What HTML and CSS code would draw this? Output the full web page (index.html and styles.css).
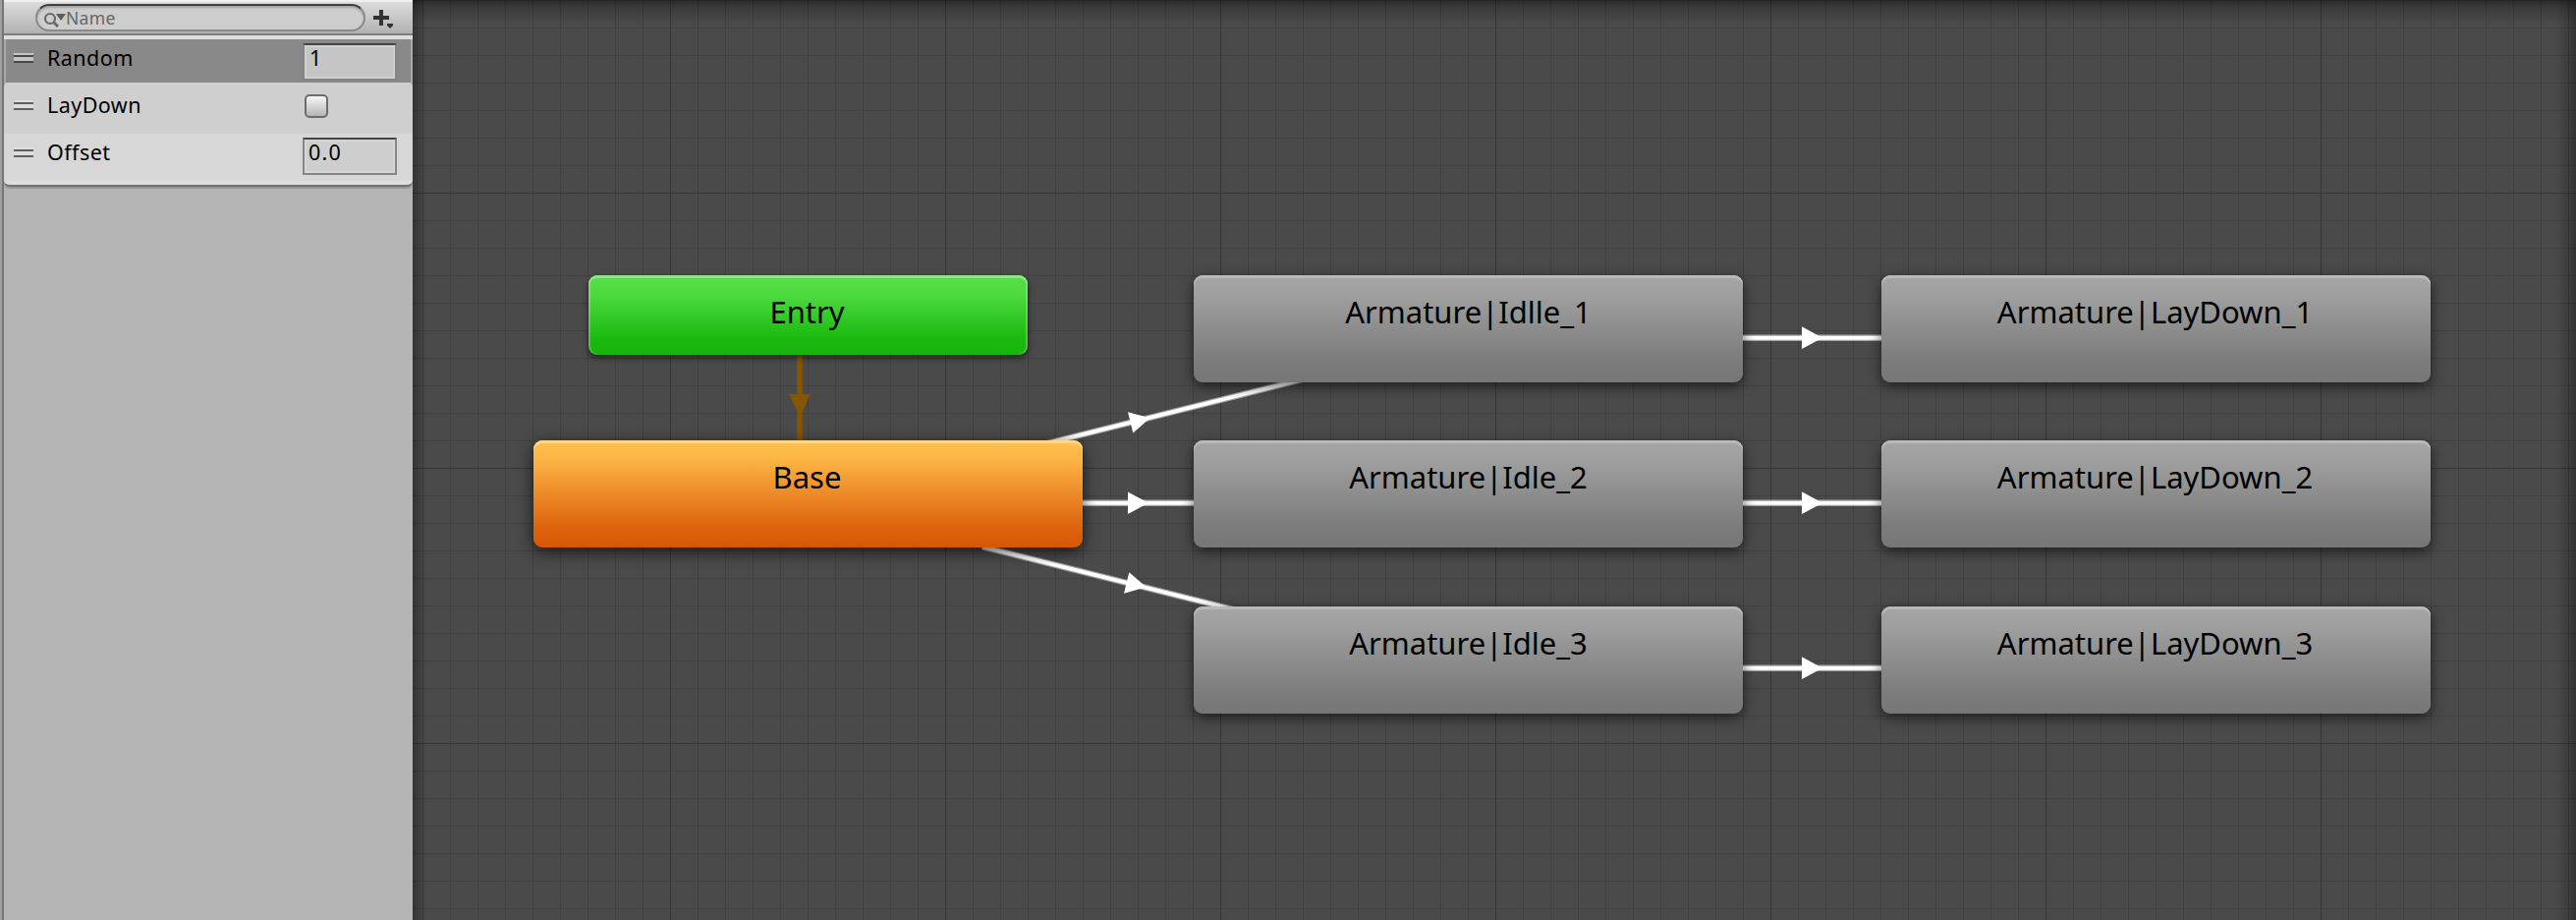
FILE: index.html
```html
<!DOCTYPE html>
<html lang="en">
<head>
<meta charset="utf-8">
<title>Animator</title>
<link rel="stylesheet" href="styles.css">
</head>
<body>
<div class="animator">
  <aside class="sidebar">
    <div class="toolbar">
      <div class="search">
        <svg class="search-icon" width="24" height="18" viewBox="0 0 24 18">
          <circle cx="7" cy="7" r="5" fill="none" stroke="#6a6a6a" stroke-width="2.2"/>
          <path d="M10.5 10.5L15 15" stroke="#6a6a6a" stroke-width="3"/>
          <path d="M13 2H23L18 9Z" fill="#5c5c5c"/>
        </svg>
        <span class="search-text">Name</span>
      </div>
      <svg class="add" width="22" height="22" viewBox="0 0 22 22">
        <path d="M6 1h4v6h6v4h-6v6h-4v-6h-6v-4h6z" fill="#333"/>
        <path d="M14 15h6v2l-3 3l-3-3z" fill="#333"/>
      </svg>
    </div>
    <div class="params">
      <div class="row selected"><i class="grip"></i><span class="label">Random</span><span class="field">1</span></div>
      <div class="row"><i class="grip"></i><span class="label">LayDown</span><span class="check"></span></div>
      <div class="row light"><i class="grip"></i><span class="label">Offset</span><span class="field decimal">0.0</span></div>
    </div>
  </aside>
  <main class="graph">
    <svg class="edges" width="2202" height="936" viewBox="420 0 2202 936">
      <g class="edge soft">
        <path d="M1050 455L1350 380M1000 556.3L1280 626.3M1100 511.7H1217M1772 343.7H1917M1772 511.7H1917M1772 679.7H1917"/>
      </g>
      <g class="edge core">
        <path d="M1050 455L1350 380M1000 556.3L1280 626.3M1100 511.7H1217M1772 343.7H1917M1772 511.7H1917M1772 679.7H1917"/>
      </g>
      <g fill="#fff">
        <path d="M1148 419.3L1170.7 425.3L1153.3 440.6Z"/>
        <path d="M1148 500.5V523L1169 511.7Z"/>
        <path d="M1149.3 582.3L1166.7 597.3L1144 603.7Z"/>
        <path d="M1834 332.3V355L1855 343.7Z"/>
        <path d="M1834 500.3V523L1855 511.7Z"/>
        <path d="M1834 668.3V691L1855 679.7Z"/>
      </g>
      <path d="M814 355V455" class="entry-edge"/>
      <path d="M803 401H825L814 423.5Z" fill="#850"/>
    </svg>
    <div class="node entry"><span>Entry</span></div>
    <div class="node base"><span>Base</span></div>
    <div class="node state idle r1"><span>Armature|Idlle_1</span></div>
    <div class="node state idle r2"><span>Armature|Idle_2</span></div>
    <div class="node state idle r3"><span>Armature|Idle_3</span></div>
    <div class="node state lay r1"><span>Armature|LayDown_1</span></div>
    <div class="node state lay r2"><span>Armature|LayDown_2</span></div>
    <div class="node state lay r3"><span>Armature|LayDown_3</span></div>
  </main>
</div>
</body>
</html>
```
FILE: styles.css
```css
* { box-sizing: border-box; }
body { margin: 0; font-family: "Noto Sans", "Open Sans", sans-serif; color: #000; }
.animator { display: flex; width: 2622px; height: 936px; overflow: hidden; }
.sidebar { width: 420px; flex: none; background: #b4b4b4; border-left: 2px solid #a0a0a0; box-shadow: inset 2px 0 #757575; padding-left: 2px; }
.toolbar { height: 36px; display: flex; border-top: 2px solid #f0f0f0; border-bottom: 2px solid #7c7c7c; background: linear-gradient(#dcdcdc, #b2b2b2); padding: 2px 0 0 32px; }
.search { width: 336px; flex: none; height: 28px; border-radius: 14px; border: 2px solid #8a8a8a; border-top-color: #404040; background: #cdcdcd; display: flex; padding: 6px 0 0 6px; box-shadow: inset 0 2px 2px rgba(0,0,0,.2); }
.search-icon { flex: none; }
.search-text { font-size: 17.5px; line-height: 24px; margin-top: -6px; color: #666; letter-spacing: .3px; margin-left: -1px; }
.add { margin: 5px 0 0 8px; flex: none; }
.params { height: 154px; border-bottom: 2px solid #707070; background: #dedede; border-radius: 0 0 6px 6px; padding-top: 4px; box-shadow: 0 2px #949494; }
.row { height: 48px; background: #cfcfcf; display: flex; align-items: flex-start; padding-left: 10px; font-size: 21.5px; letter-spacing: .45px; }
.row.selected { background: #898989; border-bottom: 4px solid #d0d0d0; border-left: 2px solid #aaa; border-right: 2px solid #aaa; padding-left: 8px; }
.row.light { background: #d7d7d7; }
.grip { width: 20px; height: 10px; margin-top: 14px; flex: none; background: linear-gradient(#dedede 2px, #606060 2px 4px, #dedede 4px 8px, #606060 8px); }
.selected .grip { background: linear-gradient(#c4c4c4 2px, #484848 2px 4px, #c4c4c4 4px 8px, #484848 8px); }
.label { width: 260px; margin: 4px 0 0 14px; line-height: 30px; flex: none; }
.field { width: 96px; height: 38px; margin-top: 4px; border: 2px solid #858585; border-top-color: #444; background: #c5c5c5; padding-left: 5px; line-height: 25px; box-shadow: inset 0 0 0 2px rgba(255,255,255,.2); }
.decimal { letter-spacing: 1.2px; padding-left: 4px; background: #cecece; }
.check { width: 24px; height: 24px; margin: 8px 0 0 2px; border: 2px solid #6c6c6c; border-radius: 5px; background: linear-gradient(#f8f8f8, #b8b4b4); }
.graph { width: 2202px; position: relative; background-color: #4a4a4a;
  background-image:
    linear-gradient(rgba(0,0,0,.42), rgba(0,0,0,.2) 8px, transparent 24px),
    linear-gradient(90deg, rgba(0,0,0,.3), transparent 14px),
    linear-gradient(270deg, rgba(0,0,0,.3), transparent 20px),
    linear-gradient(#363636 1px, transparent 1px), linear-gradient(90deg, #363636 1px, transparent 1px),
    linear-gradient(#404040 1px, transparent 1px), linear-gradient(90deg, #404040 1px, transparent 1px);
  background-size: auto, auto, auto, 280px 280px, 280px 280px, 28px 28px, 28px 28px;
  background-position: 0 0, 0 0, 0 0, 0 196px, 262px 0, 0 0, 10px 0; }
.edges { position: absolute; left: 0; top: 0; }
.edge { fill: none; stroke: #fff; }
.soft { stroke-width: 6.4; opacity: .5; }
.core { stroke-width: 4; }
.entry-edge { stroke: #850; stroke-width: 5.4; }
.node { position: absolute; width: 559px; height: 109px; border-radius: 9px; text-align: center; font-size: 31px; line-height: 42px; padding: 16px 2px 0 0; white-space: nowrap; }
.entry { left: 179px; top: 280px; width: 447px; height: 81px; background: linear-gradient(#58df4a, #4cda3e 25%, #1bb90f 80%, #1ab40e); box-shadow: inset 0 3px #8ce681, inset 2px 0 rgba(255,255,255,.2), inset -2px 0 rgba(255,255,255,.2), 0 3px 6px rgba(0,0,0,.55); }
.base { left: 123px; top: 448px; background: linear-gradient(#ffc24e, #fcb443 18%, #e06610 78%, #d65703); box-shadow: inset 0 3px #ffd588, 0 4px 16px rgba(0,0,0,.7); }
.state { background: linear-gradient(#a6a6a6, #9e9e9e 20%, #7c7c7c 80%, #777); box-shadow: inset 0 3px #b8b8b8, 0 4px 14px rgba(0,0,0,.6); }
.idle { left: 795px; padding-right: 0; }
.lay { left: 1495px; }
.r1 { top: 280px; }
.r2 { top: 448px; }
.r3 { top: 617px; }
```
